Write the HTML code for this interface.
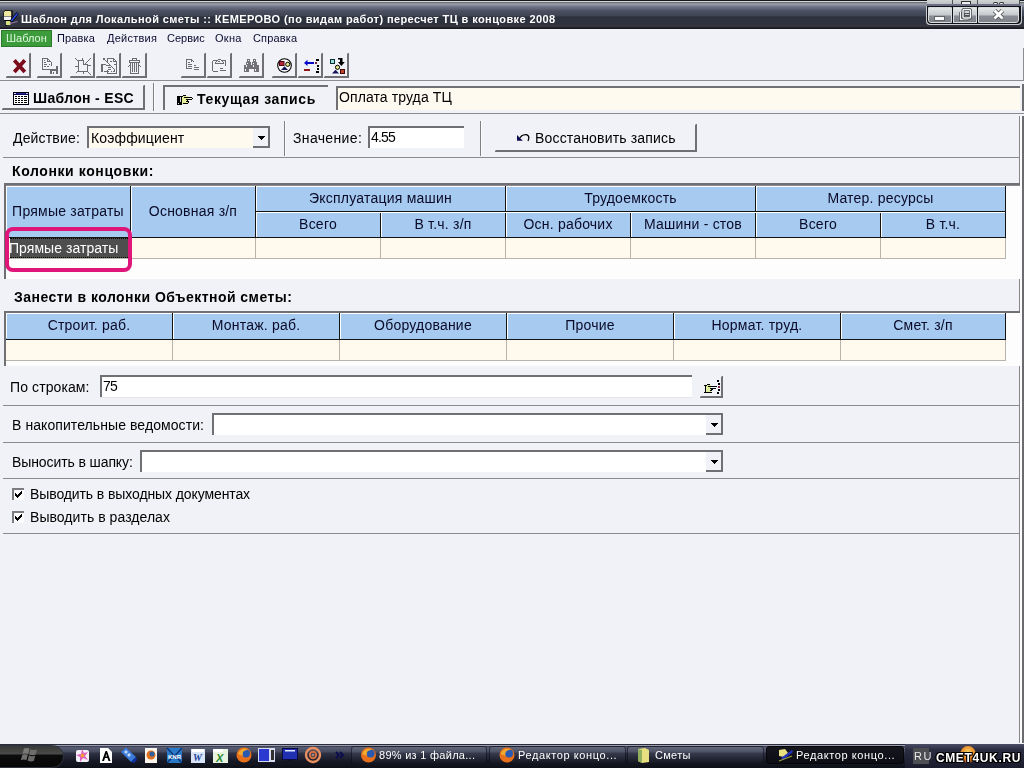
<!DOCTYPE html>
<html><head><meta charset="utf-8">
<style>
*{margin:0;padding:0;box-sizing:border-box}
html,body{width:1024px;height:768px;overflow:hidden;background:#f1f2f7;font-family:"Liberation Sans",sans-serif;color:#000}
.a{position:absolute}
.t{position:absolute;white-space:pre;will-change:transform}
svg{position:absolute;overflow:visible}
</style></head><body>
<div class="a" style="left:0px;top:0px;width:1024px;height:29px;background:linear-gradient(#15191c 0,#15191c 1px,#d5d9d9 1px,#d5d9d9 2px,#5c6064 2px,#7c8088 3px,#a0a4ae 4px,#8a8e9c 5px,#6e7286 7px,#5c6274 9px,#4a5060 11px,#3e4452 16px,#2a2e3a 17px,#2e323e 18px,#2e323e 24px,#32343e 25px,#32343e 27px,#28282e 27px,#1a1a20 28px);"></div>
<div class="t" style="left:21px;top:14px;font-size:11px;line-height:11px;font-weight:bold;color:#fff;letter-spacing:0.4px;">Шаблон для Локальной сметы :: КЕМЕРОВО (по видам работ) пересчет ТЦ в концовке 2008</div>
<svg style="left:1px;top:8px" width="20" height="20" viewBox="0 0 20 20">
 <path d="M2.5 4.5 L4 2.5 H9.5 L11 4.5 V8.5 H2.5 Z" fill="#f0e8a0" stroke="#101010" stroke-width="0.9"/>
 <rect x="3" y="8.5" width="7" height="3.5" fill="#f2f2f4"/>
 <path d="M3 12.5 H9.5" stroke="#000" stroke-width="1"/>
 <path d="M5 13 H9.5 V17 H5 Z" fill="#d8e080"/>
 <path d="M4.5 17.5 H6" stroke="#000" stroke-width="1"/>
 <path d="M11 2 V8" stroke="#000" stroke-width="1"/>
 <path d="M9 13 L15.5 4.5 L17.5 6 L11 14 Z" fill="#2848d8" stroke="#000" stroke-width="0.8"/>
 <path d="M9 15.5 L16.5 13.5" stroke="#9a78b0" stroke-width="1.2"/>
</svg>
<div class="a" style="left:927px;top:0px;width:93px;height:5px;background:linear-gradient(#d0d4d4,#b8bcc0);"></div>
<div class="a" style="left:952px;top:0px;width:1px;height:5px;background:#505058;"></div>
<div class="a" style="left:977px;top:0px;width:1px;height:5px;background:#505058;"></div>
<div class="a" style="left:1019px;top:0px;width:1px;height:5px;background:#505058;"></div>
<div class="a" style="left:961px;top:1px;width:10px;height:4px;background:#f0f0f0;border:1px solid #303030;border-bottom:none;border-radius:1px 1px 0 0"></div>
<div class="a" style="left:993px;top:2px;width:5px;height:3px;background:#f4f4f4;border:1px solid #303030;border-bottom:none;border-radius:2px 2px 0 0"></div>
<div class="a" style="left:999px;top:2px;width:5px;height:3px;background:#f4f4f4;border:1px solid #303030;border-bottom:none;border-radius:2px 2px 0 0"></div>
<div class="a" style="left:927px;top:4px;width:93px;height:2px;background:#6c6e84;"></div>
<div class="a" style="left:926px;top:6px;width:96px;height:19px;background:#c8cccc;border-radius:0 0 4px 4px"></div>
<div class="a" style="left:927px;top:6px;width:94px;height:18px;background:#101018;border-radius:0 0 4px 4px"></div>
<div class="a" style="left:928px;top:7px;width:24px;height:16px;background:linear-gradient(#e4e6e6 0,#c4c8cc 7px,#8a8e94 8px,#7c8086 16px);border:1px solid #d8dcdc;border-radius:0 0 0 3px"></div>
<div class="a" style="left:953px;top:7px;width:24px;height:16px;background:linear-gradient(#e4e6e6 0,#c4c8cc 7px,#8a8e94 8px,#7c8086 16px);border:1px solid #d8dcdc"></div>
<div class="a" style="left:978px;top:7px;width:41px;height:16px;background:linear-gradient(#e4e6e6 0,#c4c8cc 7px,#8a8e94 8px,#7c8086 16px);border:1px solid #d8dcdc;border-radius:0 0 3px 0"></div>
<div class="a" style="left:935px;top:17px;width:9px;height:3px;background:#fafafa;box-shadow:0 0 0 1px #606468"></div>
<svg style="left:958px;top:8px" width="14" height="13" viewBox="0 0 14 13">
 <path d="M2.5 4 V11.5 H10" fill="none" stroke="#404448" stroke-width="3"/>
 <path d="M2.5 4 V11.5 H10" fill="none" stroke="#f4f4f4" stroke-width="1.5"/>
 <rect x="5" y="1.5" width="7.5" height="8.5" fill="none" stroke="#404448" stroke-width="3" rx="1"/>
 <rect x="5" y="1.5" width="7.5" height="8.5" fill="none" stroke="#f4f4f4" stroke-width="1.5" rx="1"/>
 <rect x="6.5" y="5.5" width="4.5" height="2" fill="none" stroke="#505458" stroke-width="1"/>
</svg>
<svg style="left:992px;top:9px" width="13" height="11" viewBox="0 0 13 11">
 <path d="M2.5 1.5 L10.5 9.5 M10.5 1.5 L2.5 9.5" stroke="#404040" stroke-width="4.4"/>
 <path d="M2.5 1.5 L10.5 9.5 M10.5 1.5 L2.5 9.5" stroke="#fff" stroke-width="3"/>
</svg>
<div class="a" style="left:1px;top:30px;width:51px;height:17px;background:#3c9c3c;border:1px solid #2d7a2d"></div>
<div class="t" style="left:6px;top:33px;font-size:11px;line-height:11px;color:#e0f8e0;letter-spacing:0px;">Шаблон</div>
<div class="t" style="left:57px;top:33px;font-size:11px;line-height:11px;color:#0a0a30;letter-spacing:0.15px;">Правка</div>
<div class="t" style="left:107px;top:33px;font-size:11px;line-height:11px;color:#0a0a30;letter-spacing:0.25px;">Действия</div>
<div class="t" style="left:167px;top:33px;font-size:11px;line-height:11px;color:#0a0a30;letter-spacing:0px;">Сервис</div>
<div class="t" style="left:215px;top:33px;font-size:11px;line-height:11px;color:#0a0a30;letter-spacing:0.3px;">Окна</div>
<div class="t" style="left:253px;top:33px;font-size:11px;line-height:11px;color:#0a0a30;letter-spacing:0.15px;">Справка</div>
<div class="a" style="left:6px;top:53px;width:25px;height:25px;background:transparent;border-right:2px solid #707074;border-bottom:2px solid #707074;clip-path:polygon(23px 1px,26px -2px,26px 26px,-2px 26px,1px 23px)"></div>
<div class="a" style="left:37px;top:53px;width:25px;height:25px;background:transparent;border-right:2px solid #707074;border-bottom:2px solid #707074;clip-path:polygon(23px 1px,26px -2px,26px 26px,-2px 26px,1px 23px)"></div>
<div class="a" style="left:70px;top:53px;width:25px;height:25px;background:transparent;border-right:2px solid #707074;border-bottom:2px solid #707074;clip-path:polygon(23px 1px,26px -2px,26px 26px,-2px 26px,1px 23px)"></div>
<div class="a" style="left:96px;top:53px;width:25px;height:25px;background:transparent;border-right:2px solid #707074;border-bottom:2px solid #707074;clip-path:polygon(23px 1px,26px -2px,26px 26px,-2px 26px,1px 23px)"></div>
<div class="a" style="left:122px;top:53px;width:25px;height:25px;background:transparent;border-right:2px solid #707074;border-bottom:2px solid #707074;clip-path:polygon(23px 1px,26px -2px,26px 26px,-2px 26px,1px 23px)"></div>
<div class="a" style="left:181px;top:53px;width:25px;height:25px;background:transparent;border-right:2px solid #707074;border-bottom:2px solid #707074;clip-path:polygon(23px 1px,26px -2px,26px 26px,-2px 26px,1px 23px)"></div>
<div class="a" style="left:207px;top:53px;width:25px;height:25px;background:transparent;border-right:2px solid #707074;border-bottom:2px solid #707074;clip-path:polygon(23px 1px,26px -2px,26px 26px,-2px 26px,1px 23px)"></div>
<div class="a" style="left:239px;top:53px;width:25px;height:25px;background:transparent;border-right:2px solid #707074;border-bottom:2px solid #707074;clip-path:polygon(23px 1px,26px -2px,26px 26px,-2px 26px,1px 23px)"></div>
<div class="a" style="left:272px;top:53px;width:25px;height:25px;background:transparent;border-right:2px solid #707074;border-bottom:2px solid #707074;clip-path:polygon(23px 1px,26px -2px,26px 26px,-2px 26px,1px 23px)"></div>
<div class="a" style="left:298px;top:53px;width:25px;height:25px;background:transparent;border-right:2px solid #707074;border-bottom:2px solid #707074;clip-path:polygon(23px 1px,26px -2px,26px 26px,-2px 26px,1px 23px)"></div>
<div class="a" style="left:324px;top:53px;width:25px;height:25px;background:transparent;border-right:2px solid #707074;border-bottom:2px solid #707074;clip-path:polygon(23px 1px,26px -2px,26px 26px,-2px 26px,1px 23px)"></div>
<svg style="left:0;top:48px" width="360" height="32" viewBox="0 48 360 32">
 <!-- 1: X -->
 <path d="M14.3 60.3 L24.8 72 M24.8 60.3 L14.3 72" stroke="#7c0c1c" stroke-width="3.8" stroke-linecap="butt"/>
 <g shape-rendering="crispEdges" fill="#6c6c70">
 <!-- 2: doc + desk -->
  <rect x="42" y="58" width="6" height="1"/><rect x="42" y="58" width="1" height="12"/><rect x="42" y="69" width="8" height="1"/>
  <rect x="47" y="58" width="1" height="4"/><rect x="47" y="61" width="4" height="1"/><rect x="48" y="59" width="1" height="1"/><rect x="49" y="60" width="1" height="1"/><rect x="50" y="61" width="1" height="1"/>
  <rect x="51" y="62" width="1" height="4"/>
  <rect x="44" y="60" width="1" height="1"/><rect x="44" y="62" width="2" height="1"/><rect x="44" y="64" width="3" height="1"/><rect x="49" y="64" width="1" height="1"/><rect x="44" y="66" width="2" height="1"/><rect x="47" y="66" width="2" height="1"/>
  <rect x="50" y="69" width="8" height="2"/><rect x="50" y="71" width="2" height="3"/><rect x="53" y="72" width="1" height="2"/><rect x="56" y="66" width="2" height="8"/>
 <!-- 3: broken doc with rays -->
  <rect x="78" y="60" width="6" height="1"/><rect x="78" y="60" width="1" height="12"/><rect x="78" y="71" width="10" height="1"/>
  <rect x="83" y="60" width="1" height="5"/><rect x="83" y="64" width="5" height="1"/><rect x="87" y="64" width="1" height="8"/>
  <rect x="75" y="58" width="1" height="1"/><rect x="76" y="59" width="1" height="1"/><rect x="77" y="60" width="1" height="1"/>
  <rect x="82" y="58" width="1" height="2"/>
  <rect x="90" y="58" width="1" height="1"/><rect x="89" y="59" width="1" height="1"/><rect x="88" y="60" width="1" height="1"/><rect x="87" y="61" width="1" height="1"/><rect x="86" y="62" width="1" height="1"/><rect x="85" y="63" width="1" height="1"/>
  <rect x="75" y="66" width="3" height="1"/><rect x="88" y="65" width="3" height="1"/>
  <rect x="76" y="72" width="1" height="1"/><rect x="77" y="71" width="1" height="1"/>
  <rect x="83" y="72" width="1" height="2"/>
  <rect x="88" y="72" width="1" height="1"/><rect x="89" y="73" width="1" height="1"/><rect x="90" y="74" width="1" height="1"/>
 <!-- 4: doc with wand -->
  <rect x="107" y="58" width="7" height="1"/><rect x="107" y="58" width="1" height="4"/><rect x="107" y="70" width="1" height="4"/><rect x="107" y="73" width="10" height="1"/><rect x="116" y="62" width="1" height="12"/>
  <rect x="114" y="59" width="1" height="1"/><rect x="115" y="60" width="1" height="1"/><rect x="116" y="61" width="1" height="1"/><rect x="113" y="58" width="1" height="4"/><rect x="113" y="61" width="4" height="1"/>
  <rect x="103" y="58" width="2" height="2"/><rect x="105" y="60" width="1" height="1"/><rect x="106" y="61" width="1" height="1"/><rect x="107" y="62" width="1" height="1"/><rect x="108" y="63" width="1" height="1"/><rect x="109" y="64" width="1" height="1"/><rect x="110" y="65" width="1" height="1"/><rect x="111" y="66" width="1" height="1"/><rect x="112" y="67" width="1" height="1"/><rect x="113" y="68" width="1" height="1"/><rect x="114" y="69" width="1" height="2"/>
  <rect x="101" y="64" width="2" height="8"/><rect x="101" y="64" width="5" height="1"/><rect x="104" y="71" width="5" height="1"/>
  <rect x="110" y="61" width="2" height="1"/><rect x="114" y="64" width="2" height="1"/><rect x="106" y="65" width="4" height="1"/><rect x="108" y="67" width="3" height="1"/><rect x="108" y="69" width="3" height="1"/><rect x="111" y="71" width="1" height="1"/><rect x="113" y="71" width="2" height="1"/>
 <!-- 5: trash -->
  <rect x="132" y="58" width="5" height="1"/><rect x="132" y="58" width="1" height="2"/><rect x="136" y="58" width="1" height="2"/>
  <rect x="129" y="60" width="11" height="1"/><rect x="129" y="60" width="1" height="3"/><rect x="139" y="60" width="1" height="3"/><rect x="129" y="62" width="11" height="1"/>
  <rect x="130" y="63" width="1" height="11"/><rect x="138" y="63" width="1" height="11"/><rect x="130" y="73" width="9" height="1"/>
  <rect x="132" y="63" width="1" height="9"/><rect x="134" y="63" width="1" height="9"/><rect x="136" y="63" width="1" height="9"/>
  <rect x="128" y="66" width="1" height="1"/><rect x="129" y="65" width="1" height="1"/><rect x="139" y="65" width="1" height="1"/><rect x="140" y="66" width="1" height="1"/>
 <!-- 6: doc lines -->
  <rect x="186" y="59" width="6" height="1"/><rect x="186" y="59" width="1" height="10"/><rect x="186" y="68" width="6" height="1"/>
  <rect x="192" y="60" width="1" height="1"/><rect x="193" y="61" width="1" height="1"/><rect x="191" y="60" width="1" height="2"/>
  <rect x="188" y="62" width="2" height="1"/><rect x="188" y="64" width="4" height="1"/><rect x="188" y="66" width="4" height="1"/>
  <rect x="194" y="65" width="2" height="1"/><rect x="194" y="67" width="5" height="1"/><rect x="194" y="69" width="5" height="1"/>
 <!-- 7: clipboard -->
  <rect x="212" y="61" width="1" height="10"/><rect x="213" y="60" width="4" height="1"/><rect x="222" y="60" width="4" height="1"/><rect x="225" y="61" width="1" height="5"/><rect x="213" y="71" width="5" height="1"/>
  <rect x="218" y="59" width="3" height="1"/><rect x="217" y="60" width="1" height="1"/><rect x="221" y="60" width="1" height="1"/><rect x="216" y="61" width="1" height="1"/><rect x="222" y="61" width="1" height="1"/><rect x="215" y="62" width="1" height="1"/><rect x="223" y="62" width="1" height="1"/><rect x="215" y="63" width="9" height="1"/><rect x="218" y="61" width="2" height="1"/>
  <rect x="220" y="68" width="3" height="1"/><rect x="220" y="70" width="6" height="1"/>
 </g>
 <!-- 8: binoculars -->
 <g shape-rendering="crispEdges" fill="#727276">
  <rect x="247" y="59" width="3" height="3"/><rect x="253" y="59" width="3" height="3"/>
  <rect x="246" y="62" width="5" height="3"/><rect x="252" y="62" width="5" height="3"/>
  <rect x="244" y="65" width="5" height="7"/><rect x="254" y="65" width="5" height="7"/>
  <rect x="249" y="65" width="5" height="4"/>
 </g>
 <g shape-rendering="crispEdges" fill="#f4f4f8">
  <rect x="248" y="60" width="1" height="1"/><rect x="254" y="60" width="1" height="1"/>
  <rect x="247" y="63" width="1" height="1"/><rect x="253" y="63" width="1" height="1"/>
  <rect x="246" y="65" width="1" height="2"/><rect x="253" y="65" width="1" height="2"/>
  <rect x="245" y="69" width="1" height="2"/><rect x="255" y="69" width="1" height="2"/>
 </g>
 <!-- 9: circle with shapes -->
 <circle cx="284.5" cy="65.5" r="6.8" fill="#fbfbfd" stroke="#000" stroke-width="1.1"/>
 <rect x="279.5" y="61.5" width="4.5" height="4" fill="#b02838" stroke="#500010" stroke-width="1"/>
 <circle cx="287.7" cy="64.3" r="2.1" fill="#e4e488" stroke="#000" stroke-width="1"/>
 <path d="M281 70 L284.5 66.3 L288 70 Z" fill="#141458"/>
 <!-- 10: arrow + dots -->
 <path d="M304 62.9 L307.5 59.8 V61.9 H314 V63.9 H307.5 V66 Z" fill="#0808c8"/>
 <g shape-rendering="crispEdges">
  <rect x="304" y="69" width="6" height="2" fill="#901818"/>
  <rect x="315" y="62" width="2" height="2" fill="#702040"/>
  <rect x="316" y="59" width="3" height="2" fill="#000"/><rect x="317" y="65" width="2" height="2" fill="#000"/><rect x="317" y="68" width="2" height="2" fill="#000"/><rect x="316" y="71" width="3" height="2" fill="#000"/>
 </g>
 <!-- 11: shapes with arrow -->
 <rect x="330.5" y="59.5" width="4" height="4" fill="#a0dcdc" stroke="#003030" stroke-width="1"/>
 <path d="M338 58 H342.5 V62 H344.8 L341.4 66 L338 62 H340 V59.5 H338 Z" fill="#000"/>
 <circle cx="337.5" cy="67.3" r="2.1" fill="#e4e488" stroke="#000" stroke-width="1"/>
 <path d="M332 73.6 L335.5 69.8 L339 73.6 Z" fill="#141458"/>
 <rect x="340.5" y="69.5" width="4" height="4" fill="#c04428" stroke="#400808" stroke-width="1"/>
</svg>

<div class="a" style="left:0px;top:80px;width:1024px;height:1px;background:#8c8c90;"></div>
<div class="a" style="left:2px;top:85px;width:143px;height:25px;background:transparent;border-right:2px solid #707074;border-bottom:2px solid #707074;clip-path:polygon(141px 1px,144px -2px,144px 26px,-2px 26px,1px 23px)"></div>
<svg style="left:13px;top:92px" width="16" height="13" viewBox="0 0 16 13">
 <rect x="0" y="0" width="16" height="13" fill="#000010"/>
 <rect x="1" y="1" width="14" height="2" fill="#0a0a60"/>
 <rect x="1" y="3" width="14" height="9" fill="#fff"/>
 <rect x="1" y="1" width="2" height="1" fill="#c8c8f0"/><rect x="13" y="1" width="2" height="1" fill="#c8c8f0"/><rect x="4" y="1" width="8" height="1" fill="#2828a0"/>
 <g fill="#000">
  <rect x="2" y="4" width="2" height="1"/><rect x="5" y="4" width="2" height="1"/><rect x="8" y="4" width="2" height="1"/><rect x="11" y="4" width="3" height="1"/>
  <rect x="2" y="6" width="2" height="1"/><rect x="5" y="6" width="2" height="1"/><rect x="8" y="6" width="2" height="1"/><rect x="11" y="6" width="3" height="1"/>
  <rect x="2" y="8" width="2" height="1"/><rect x="5" y="8" width="2" height="1"/><rect x="8" y="8" width="2" height="1"/><rect x="11" y="8" width="3" height="1"/>
  <rect x="2" y="10" width="2" height="1"/><rect x="5" y="10" width="2" height="1"/><rect x="8" y="10" width="2" height="1"/><rect x="11" y="10" width="3" height="1"/>
 </g>
</svg>
<div class="t" style="left:33px;top:91px;font-size:14px;line-height:14px;font-weight:bold;color:#000;letter-spacing:0.33px;">Шаблон - ESC</div>
<div class="a" style="left:153px;top:83px;width:1px;height:28px;background:#808084;"></div>
<div class="a" style="left:154px;top:83px;width:1px;height:28px;background:#fcfcfc;"></div>
<div class="a" style="left:163px;top:85px;width:165px;height:25px;background:transparent;border-left:2px solid #707074;border-top:2px solid #707074"></div>
<svg style="left:0;top:0" width="1" height="1" viewBox="0 0 1 1" shape-rendering="crispEdges">
 <rect x="182" y="96" width="6" height="8" fill="#e4ee98"/>
 <rect x="188" y="98" width="4" height="1" fill="#f8f8e0"/>
 <g fill="#000">
  <rect x="177" y="96" width="5" height="9"/>
  <rect x="183" y="95" width="3" height="1"/><rect x="182" y="96" width="1" height="1"/>
  <rect x="184" y="97" width="8" height="1"/><rect x="192" y="98" width="1" height="1"/>
  <rect x="186" y="99" width="6" height="1"/><rect x="187" y="100" width="1" height="1"/>
  <rect x="186" y="101" width="3" height="1"/><rect x="188" y="102" width="1" height="1"/>
  <rect x="183" y="103" width="5" height="1"/>
 </g>
 <rect x="180" y="97" width="1" height="5" fill="#c8ccd0"/>
 <rect x="178" y="103" width="1" height="1" fill="#e0e0e0"/>
</svg>
<div class="t" style="left:197px;top:92px;font-size:14px;line-height:14px;font-weight:bold;color:#000;letter-spacing:0.62px;">Текущая запись</div>
<div class="a" style="left:336px;top:86px;width:684px;height:24px;background:#fffaf0;border-left:2px solid #707074;border-top:2px solid #707074"></div>
<div class="t" style="left:339px;top:90px;font-size:14px;line-height:14px;color:#000;letter-spacing:0.1px;">Оплата труда ТЦ</div>
<div class="a" style="left:0px;top:113px;width:1024px;height:1px;background:#8c8c90;"></div>
<div class="a" style="left:1019px;top:116px;width:1px;height:627px;background:#88888c;"></div>
<div class="a" style="left:1020px;top:116px;width:2px;height:627px;background:#fcfcfc;"></div>
<div class="a" style="left:1022px;top:116px;width:2px;height:627px;background:#6c6c70;"></div>
<div class="a" style="left:1023px;top:48px;width:1px;height:32px;background:#8c8c90;"></div>
<div class="a" style="left:1022px;top:84px;width:2px;height:27px;background:#6c6c70;"></div>
<div class="t" style="left:13px;top:131px;font-size:14px;line-height:14px;color:#000;letter-spacing:0.17px;">Действие:</div>
<div class="a" style="left:87px;top:126px;width:166px;height:22px;background:#fffaf0;border-left:2px solid #707074;border-top:2px solid #707074"></div>
<div class="a" style="left:253px;top:126px;width:17px;height:22px;background:#f1f2f7;border-top:2px solid #707074;border-right:2px solid #707074;border-bottom:2px solid #707074"></div>
<svg style="left:258px;top:136px" width="7" height="4" viewBox="0 0 7 4"><path d="M0 0 H7 V1 H6 V2 H5 V3 H4 V4 H3 V3 H2 V2 H1 V1 H0Z" fill="#000"/></svg>
<div class="t" style="left:91px;top:131px;font-size:14px;line-height:14px;color:#000;letter-spacing:0.15px;">Коэффициент</div>
<div class="a" style="left:284px;top:121px;width:1px;height:35px;background:#808084;"></div>
<div class="a" style="left:285px;top:121px;width:1px;height:35px;background:#fcfcfc;"></div>
<div class="t" style="left:293px;top:131px;font-size:14px;line-height:14px;color:#000;letter-spacing:0.35px;">Значение:</div>
<div class="a" style="left:368px;top:126px;width:96px;height:22px;background:#fff;border-left:2px solid #707074;border-top:2px solid #707074"></div>
<div class="t" style="left:371px;top:130px;font-size:14px;line-height:14px;color:#000;letter-spacing:-0.8px;">4.55</div>
<div class="a" style="left:480px;top:121px;width:1px;height:35px;background:#808084;"></div>
<div class="a" style="left:481px;top:121px;width:1px;height:35px;background:#fcfcfc;"></div>
<div class="a" style="left:495px;top:124px;width:202px;height:28px;background:transparent;border-right:2px solid #707074;border-bottom:2px solid #707074;clip-path:polygon(200px 1px,203px -2px,203px 29px,-2px 29px,1px 26px)"></div>
<svg style="left:0;top:0" width="1" height="1" viewBox="0 0 1 1">
 <path d="M517 135 V140.8 H522.8 Z" fill="#0a0a50"/>
 <path d="M519.8 137.8 L521.5 136 Q523.5 134.3 526.5 134.6 Q529.3 135.5 528.8 138.5 L528 141" fill="none" stroke="#000" stroke-width="1.2"/>
</svg>
<div class="t" style="left:535px;top:131px;font-size:14px;line-height:14px;color:#000;letter-spacing:0.17px;">Восстановить запись</div>
<div class="a" style="left:3px;top:157px;width:1016px;height:1px;background:#8c8c90;"></div>
<div class="t" style="left:12px;top:164px;font-size:14px;line-height:14px;font-weight:bold;color:#000;letter-spacing:0.6px;">Колонки концовки:</div>
<div class="a" style="left:4px;top:183px;width:1016px;height:96px;background:#fdfdfd;"></div>
<div class="a" style="left:4px;top:183px;width:1016px;height:2px;background:#707074;"></div>
<div class="a" style="left:4px;top:185px;width:1016px;height:1px;background:#8a8a90;"></div>
<div class="a" style="left:4px;top:183px;width:2px;height:96px;background:#707074;"></div>
<div class="a" style="left:6px;top:186px;width:1000px;height:51px;background:#a6caf0;"></div>
<div class="a" style="left:6px;top:186px;width:1000px;height:1px;background:#fff;"></div>
<div class="a" style="left:6px;top:186px;width:1px;height:51px;background:#fff;"></div>
<div class="a" style="left:6px;top:238px;width:1000px;height:20px;background:#fff9ee;"></div>
<div class="a" style="left:130px;top:238px;width:1px;height:20px;background:#b8b4ac;"></div>
<div class="a" style="left:255px;top:238px;width:1px;height:20px;background:#b8b4ac;"></div>
<div class="a" style="left:380px;top:238px;width:1px;height:20px;background:#b8b4ac;"></div>
<div class="a" style="left:505px;top:238px;width:1px;height:20px;background:#b8b4ac;"></div>
<div class="a" style="left:630px;top:238px;width:1px;height:20px;background:#b8b4ac;"></div>
<div class="a" style="left:755px;top:238px;width:1px;height:20px;background:#b8b4ac;"></div>
<div class="a" style="left:880px;top:238px;width:1px;height:20px;background:#b8b4ac;"></div>
<div class="a" style="left:1005px;top:238px;width:1px;height:21px;background:#b8b4ac;"></div>
<div class="a" style="left:6px;top:258px;width:1000px;height:1px;background:#b8b4ac;"></div>
<div class="a" style="left:6px;top:237px;width:1000px;height:1px;background:#141414;"></div>
<div class="a" style="left:1005px;top:186px;width:1px;height:52px;background:#141414;"></div>
<div class="a" style="left:130px;top:186px;width:1px;height:51px;background:#141414;"></div>
<div class="a" style="left:131px;top:187px;width:1px;height:50px;background:#fff;"></div>
<div class="a" style="left:255px;top:186px;width:1px;height:51px;background:#141414;"></div>
<div class="a" style="left:256px;top:187px;width:1px;height:50px;background:#fff;"></div>
<div class="a" style="left:505px;top:186px;width:1px;height:51px;background:#141414;"></div>
<div class="a" style="left:506px;top:187px;width:1px;height:50px;background:#fff;"></div>
<div class="a" style="left:755px;top:186px;width:1px;height:51px;background:#141414;"></div>
<div class="a" style="left:756px;top:187px;width:1px;height:50px;background:#fff;"></div>
<div class="a" style="left:380px;top:212px;width:1px;height:25px;background:#141414;"></div>
<div class="a" style="left:381px;top:213px;width:1px;height:24px;background:#fff;"></div>
<div class="a" style="left:630px;top:212px;width:1px;height:25px;background:#141414;"></div>
<div class="a" style="left:631px;top:213px;width:1px;height:24px;background:#fff;"></div>
<div class="a" style="left:880px;top:212px;width:1px;height:25px;background:#141414;"></div>
<div class="a" style="left:881px;top:213px;width:1px;height:24px;background:#fff;"></div>
<div class="a" style="left:256px;top:211px;width:749px;height:1px;background:#141414;"></div>
<div class="a" style="left:256px;top:212px;width:749px;height:1px;background:#fff;"></div>
<div class="t" style="left:6px;top:204px;width:124px;text-align:center;font-size:14px;line-height:14px;color:#0a0a28;letter-spacing:0.22px">Прямые затраты</div>
<div class="t" style="left:131px;top:204px;width:124px;text-align:center;font-size:14px;line-height:14px;color:#0a0a28;letter-spacing:0.22px">Основная з/п</div>
<div class="t" style="left:256px;top:191px;width:249px;text-align:center;font-size:14px;line-height:14px;color:#0a0a28;letter-spacing:0.22px">Эксплуатация машин</div>
<div class="t" style="left:256px;top:217px;width:124px;text-align:center;font-size:14px;line-height:14px;color:#0a0a28;letter-spacing:0.22px">Всего</div>
<div class="t" style="left:381px;top:217px;width:124px;text-align:center;font-size:14px;line-height:14px;color:#0a0a28;letter-spacing:0.22px">В т.ч. з/п</div>
<div class="t" style="left:506px;top:191px;width:249px;text-align:center;font-size:14px;line-height:14px;color:#0a0a28;letter-spacing:0.22px">Трудоемкость</div>
<div class="t" style="left:506px;top:217px;width:124px;text-align:center;font-size:14px;line-height:14px;color:#0a0a28;letter-spacing:0.22px">Осн. рабочих</div>
<div class="t" style="left:631px;top:217px;width:124px;text-align:center;font-size:14px;line-height:14px;color:#0a0a28;letter-spacing:0.22px">Машини - стов</div>
<div class="t" style="left:756px;top:191px;width:249px;text-align:center;font-size:14px;line-height:14px;color:#0a0a28;letter-spacing:0.22px">Матер. ресурсы</div>
<div class="t" style="left:756px;top:217px;width:124px;text-align:center;font-size:14px;line-height:14px;color:#0a0a28;letter-spacing:0.22px">Всего</div>
<div class="t" style="left:881px;top:217px;width:124px;text-align:center;font-size:14px;line-height:14px;color:#0a0a28;letter-spacing:0.22px">В т.ч.</div>
<div class="a" style="left:10px;top:238px;width:118px;height:20px;background:#4e4e4e;border-top:1px dotted #000;border-bottom:1px dotted #000"></div>
<div class="t" style="left:9px;top:241px;font-size:14px;line-height:14px;color:#fff;letter-spacing:0.05px;">Прямые затраты</div>
<div class="a" style="left:5px;top:227px;width:127px;height:45px;background:transparent;border:4px solid #e0157a;border-radius:8px"></div>
<div class="t" style="left:14px;top:290px;font-size:14px;line-height:14px;font-weight:bold;color:#000;letter-spacing:0.47px;">Занести в колонки Объектной сметы:</div>
<div class="a" style="left:4px;top:311px;width:1016px;height:55px;background:#fdfdfd;"></div>
<div class="a" style="left:4px;top:311px;width:1016px;height:2px;background:#707074;"></div>
<div class="a" style="left:4px;top:311px;width:2px;height:55px;background:#707074;"></div>
<div class="a" style="left:6px;top:313px;width:1000px;height:26px;background:#a6caf0;"></div>
<div class="a" style="left:6px;top:313px;width:1000px;height:1px;background:#fff;"></div>
<div class="a" style="left:6px;top:313px;width:1px;height:25px;background:#fff;"></div>
<div class="a" style="left:6px;top:340px;width:1000px;height:20px;background:#fff9ee;"></div>
<div class="a" style="left:172px;top:313px;width:1px;height:26px;background:#141414;"></div>
<div class="a" style="left:173px;top:314px;width:1px;height:25px;background:#fff;"></div>
<div class="a" style="left:172px;top:340px;width:1px;height:20px;background:#b8b4ac;"></div>
<div class="a" style="left:339px;top:313px;width:1px;height:26px;background:#141414;"></div>
<div class="a" style="left:340px;top:314px;width:1px;height:25px;background:#fff;"></div>
<div class="a" style="left:339px;top:340px;width:1px;height:20px;background:#b8b4ac;"></div>
<div class="a" style="left:506px;top:313px;width:1px;height:26px;background:#141414;"></div>
<div class="a" style="left:507px;top:314px;width:1px;height:25px;background:#fff;"></div>
<div class="a" style="left:506px;top:340px;width:1px;height:20px;background:#b8b4ac;"></div>
<div class="a" style="left:673px;top:313px;width:1px;height:26px;background:#141414;"></div>
<div class="a" style="left:674px;top:314px;width:1px;height:25px;background:#fff;"></div>
<div class="a" style="left:673px;top:340px;width:1px;height:20px;background:#b8b4ac;"></div>
<div class="a" style="left:840px;top:313px;width:1px;height:26px;background:#141414;"></div>
<div class="a" style="left:841px;top:314px;width:1px;height:25px;background:#fff;"></div>
<div class="a" style="left:840px;top:340px;width:1px;height:20px;background:#b8b4ac;"></div>
<div class="a" style="left:1005px;top:313px;width:1px;height:27px;background:#141414;"></div>
<div class="a" style="left:1005px;top:340px;width:1px;height:21px;background:#b8b4ac;"></div>
<div class="a" style="left:6px;top:339px;width:1000px;height:1px;background:#141414;"></div>
<div class="a" style="left:6px;top:360px;width:1000px;height:1px;background:#b8b4ac;"></div>
<div class="t" style="left:6px;top:318px;width:166px;text-align:center;font-size:14px;line-height:14px;color:#0a0a28;letter-spacing:0.22px">Строит. раб.</div>
<div class="t" style="left:173px;top:318px;width:166px;text-align:center;font-size:14px;line-height:14px;color:#0a0a28;letter-spacing:0.22px">Монтаж. раб.</div>
<div class="t" style="left:340px;top:318px;width:166px;text-align:center;font-size:14px;line-height:14px;color:#0a0a28;letter-spacing:0.22px">Оборудование</div>
<div class="t" style="left:507px;top:318px;width:166px;text-align:center;font-size:14px;line-height:14px;color:#0a0a28;letter-spacing:0.22px">Прочие</div>
<div class="t" style="left:674px;top:318px;width:166px;text-align:center;font-size:14px;line-height:14px;color:#0a0a28;letter-spacing:0.22px">Нормат. труд.</div>
<div class="t" style="left:841px;top:318px;width:164px;text-align:center;font-size:14px;line-height:14px;color:#0a0a28;letter-spacing:0.22px">Смет. з/п</div>
<div class="t" style="left:10px;top:380px;font-size:14px;line-height:14px;color:#000;letter-spacing:0.1px;">По строкам:</div>
<div class="a" style="left:100px;top:375px;width:592px;height:22px;background:#fff;border-left:2px solid #707074;border-top:2px solid #707074"></div>
<div class="a" style="left:100px;top:397px;width:592px;height:1px;background:#e6e6ea;"></div>
<div class="t" style="left:103px;top:379px;font-size:14px;line-height:14px;color:#000;letter-spacing:-0.8px;">75</div>
<div class="a" style="left:700px;top:376px;width:23px;height:22px;background:transparent;border-right:2px solid #707074;border-bottom:2px solid #707074;clip-path:polygon(21px 1px,24px -2px,24px 23px,-2px 23px,1px 20px)"></div>
<svg style="left:0;top:0" width="1" height="1" viewBox="0 0 1 1" shape-rendering="crispEdges">
 <rect x="706" y="385" width="5" height="7" fill="#e0eea0"/>
 <g fill="#000">
  <rect x="704" y="385" width="3" height="1"/><rect x="705" y="385" width="1" height="8"/><rect x="704" y="392" width="3" height="1"/>
  <rect x="707" y="384" width="3" height="1"/>
  <rect x="708" y="386" width="9" height="1"/>
  <rect x="710" y="388" width="6" height="1"/><rect x="711" y="389" width="2" height="1"/>
  <rect x="710" y="390" width="2" height="1"/>
  <rect x="707" y="392" width="5" height="1"/>
  <rect x="717" y="380" width="2" height="2"/><rect x="718" y="383" width="2" height="2"/><rect x="718" y="389" width="2" height="2"/><rect x="717" y="392" width="2" height="2"/>
 </g>
 <rect x="718" y="386" width="2" height="2" fill="#802040"/>
</svg>
<div class="a" style="left:3px;top:405px;width:1016px;height:1px;background:#8c8c90;"></div>
<div class="t" style="left:12px;top:418px;font-size:14px;line-height:14px;color:#000;letter-spacing:0.08px;">В накопительные ведомости:</div>
<div class="a" style="left:212px;top:413px;width:494px;height:22px;background:#fff;border-left:2px solid #707074;border-top:2px solid #707074"></div>
<div class="a" style="left:706px;top:413px;width:17px;height:22px;background:#f1f2f7;border-top:2px solid #707074;border-right:2px solid #707074;border-bottom:2px solid #707074"></div>
<svg style="left:711px;top:423px" width="7" height="4" viewBox="0 0 7 4"><path d="M0 0 H7 V1 H6 V2 H5 V3 H4 V4 H3 V3 H2 V2 H1 V1 H0Z" fill="#000"/></svg>
<div class="a" style="left:3px;top:442px;width:1016px;height:1px;background:#8c8c90;"></div>
<div class="t" style="left:12px;top:455px;font-size:14px;line-height:14px;color:#000;letter-spacing:-0.1px;">Выносить в шапку:</div>
<div class="a" style="left:140px;top:450px;width:566px;height:22px;background:#fff;border-left:2px solid #707074;border-top:2px solid #707074"></div>
<div class="a" style="left:706px;top:450px;width:17px;height:22px;background:#f1f2f7;border-top:2px solid #707074;border-right:2px solid #707074;border-bottom:2px solid #707074"></div>
<svg style="left:711px;top:460px" width="7" height="4" viewBox="0 0 7 4"><path d="M0 0 H7 V1 H6 V2 H5 V3 H4 V4 H3 V3 H2 V2 H1 V1 H0Z" fill="#000"/></svg>
<div class="a" style="left:3px;top:478px;width:1016px;height:1px;background:#8c8c90;"></div>
<svg style="left:12px;top:488px" width="12" height="12" viewBox="0 0 12 12" shape-rendering="crispEdges">
 <rect x="0" y="0" width="12" height="2" fill="#7c7c80"/><rect x="0" y="0" width="2" height="12" fill="#7c7c80"/>
 <rect x="2" y="2" width="10" height="10" fill="#fcfcfc"/>
 <g fill="#000"><rect x="3" y="5" width="1" height="3"/><rect x="4" y="6" width="1" height="3"/><rect x="5" y="7" width="1" height="3"/><rect x="6" y="6" width="1" height="3"/><rect x="7" y="5" width="1" height="3"/><rect x="8" y="4" width="1" height="3"/><rect x="9" y="3" width="1" height="3"/></g>
</svg>
<div class="t" style="left:30px;top:487px;font-size:14px;line-height:14px;color:#000;letter-spacing:-0.1px;">Выводить в выходных документах</div>
<svg style="left:12px;top:511px" width="12" height="12" viewBox="0 0 12 12" shape-rendering="crispEdges">
 <rect x="0" y="0" width="12" height="2" fill="#7c7c80"/><rect x="0" y="0" width="2" height="12" fill="#7c7c80"/>
 <rect x="2" y="2" width="10" height="10" fill="#fcfcfc"/>
 <g fill="#000"><rect x="3" y="5" width="1" height="3"/><rect x="4" y="6" width="1" height="3"/><rect x="5" y="7" width="1" height="3"/><rect x="6" y="6" width="1" height="3"/><rect x="7" y="5" width="1" height="3"/><rect x="8" y="4" width="1" height="3"/><rect x="9" y="3" width="1" height="3"/></g>
</svg>
<div class="t" style="left:30px;top:510px;font-size:14px;line-height:14px;color:#000;letter-spacing:0.05px;">Выводить в разделах</div>
<div class="a" style="left:3px;top:533px;width:1016px;height:1px;background:#8c8c90;"></div>
<div class="a" style="left:0;top:743px;width:1024px;height:25px;background:linear-gradient(#f1f2f7 0,#f1f2f7 1px,#2a2c3a 1px,#2a2c3a 2px,#9a9cb0 2px,#9a9cb0 3px,#3c4054 3px,#3c4054 4px,#5a5e72 4px,#464a5e 9px,#2e3244 10px,#1a1c2a 17px,#161824 18px,#0e1018 25px)"></div>
<!-- start button -->
<div class="a" style="left:-12px;top:745px;width:76px;height:23px;border-radius:0 12px 12px 0;background:linear-gradient(#383838 0,#4a4a48 8px,#0c0c0c 9px,#050505 23px);border:1px solid #30343c"></div>
<svg style="left:20px;top:747px" width="20" height="16" viewBox="0 0 20 16">
 <path d="M4 1.5 C6 0.5 8 0.8 9.5 1.8 L8 7 C6.5 6 4.5 6 2.5 7 Z" fill="#7a7a78"/>
 <path d="M10.5 2.2 C12 3.2 14 3.4 17 2.5 L15.5 7.8 C13 8.5 11 8.3 9.2 7.3 Z" fill="#6e6e6c"/>
 <path d="M2.3 8 C4.2 7 6.2 7 7.8 8 L6.3 13.3 C4.8 12.3 2.8 12.3 0.8 13.3 Z" fill="#707070"/>
 <path d="M9 8.3 C10.8 9.3 12.8 9.5 15.3 8.8 L13.8 14 C11.5 14.8 9.5 14.5 7.6 13.5 Z" fill="#686866"/>
</svg>
<!-- quick launch icons -->
<svg style="left:74px;top:747px" width="272" height="18" viewBox="74 747 272 18">
 <rect x="76" y="750" width="13" height="12" rx="2" fill="#f4f0f8"/>
 <path d="M82 749 L84 753 L88 752 L85 756 L88 760 L83 758 L80 762 L80 757 L76 755 L81 754 Z" fill="#e060c0"/>
 <circle cx="82.5" cy="755.5" r="1.8" fill="#f0a030"/>
 <path d="M100 748 H108 L112 752 V763 H100 Z" fill="#fff"/>
 <path d="M102 761 L105.5 751 H107 L110.5 761 H108.5 L107.5 758 H105 L104 761 Z M105.5 756.5 H107 L106.3 754 Z" fill="#000"/>
 <path d="M121 752 L126 747.5 L136 757 L131 762 Z" fill="#3a7ad8"/>
 <path d="M124 752 L126 750 L128 752 L126 754 Z M127 755 L129 753 L131 755 L129 757 Z" fill="#c0d8f8"/>
 <path d="M131 762 L136 757 L137 760 L134 763 Z" fill="#1030a0"/>
 <rect x="145" y="748" width="12" height="15" fill="#f8f4ec"/>
 <circle cx="151" cy="755" r="4.5" fill="#e07020"/>
 <circle cx="152" cy="754" r="2.5" fill="#3060a0"/>
 <rect x="167" y="748" width="15" height="15" fill="#2a78c8"/>
 <path d="M167 748 L174 755.5 L167 763 M182 748 L175 755.5 L182 763" fill="none" stroke="#0a3070" stroke-width="1.2"/>
 <text x="168" y="759" font-family="Liberation Sans" font-size="6" font-weight="bold" fill="#fff">KNR</text>
 <rect x="191" y="749" width="14" height="14" fill="#d8e4f8"/>
 <rect x="192" y="749" width="12" height="3" fill="#fff"/>
 <text x="193" y="761" font-family="Liberation Serif" font-size="10" font-style="italic" font-weight="bold" fill="#2040a0">W</text>
 <rect x="213" y="749" width="15" height="14" fill="#e8f4e0"/>
 <path d="M213 749 h10 v3 h-10z" fill="#fff"/>
 <text x="216" y="762" font-family="Liberation Sans" font-size="11" font-style="italic" font-weight="bold" fill="#2a8a30">X</text>
 <circle cx="244" cy="755" r="7.5" fill="#e8701a"/>
 <circle cx="246" cy="753.5" r="4" fill="#2a5ab0"/>
 <path d="M238 754 C240 748 246 748 248 750 C244 750 242 752 243 756 Z" fill="#f0a830"/>
 <rect x="258" y="748" width="17" height="14" fill="#d8dcf0"/>
 <rect x="259" y="749" width="10" height="12" fill="#2a3ad0"/>
 <rect x="271" y="750" width="3" height="10" fill="#303030"/>
 <rect x="282" y="748" width="16" height="12" fill="#0a0a40"/>
 <rect x="283" y="749" width="14" height="10" fill="#2030b0"/>
 <rect x="285" y="750" width="10" height="1.5" fill="#e0e8ff"/>
 <path d="M286 763 L290 760 L294 763" fill="none" stroke="#101020" stroke-width="1"/>
 <circle cx="313" cy="755" r="7" fill="none" stroke="#e89060" stroke-width="2.4"/>
 <circle cx="313" cy="755" r="3.2" fill="none" stroke="#d87040" stroke-width="2"/>
 <circle cx="313" cy="755" r="1.6" fill="#a08880"/>
 <path d="M336 752 L339 755 L336 758 M340 752 L343 755 L340 758" fill="none" stroke="#0c0c50" stroke-width="2"/>
</svg>
<!-- task buttons -->
<div class="a" style="left:351px;top:746px;width:136px;height:18px;border-radius:3px;background:linear-gradient(rgba(255,255,255,0.06),rgba(255,255,255,0.02));border:1px solid rgba(10,10,20,0.55)"></div>
<div class="a" style="left:489px;top:746px;width:137px;height:18px;border-radius:3px;background:linear-gradient(rgba(255,255,255,0.06),rgba(255,255,255,0.02));border:1px solid rgba(10,10,20,0.55)"></div>
<div class="a" style="left:627px;top:746px;width:137px;height:18px;border-radius:3px;background:linear-gradient(rgba(255,255,255,0.06),rgba(255,255,255,0.02));border:1px solid rgba(10,10,20,0.55)"></div>
<div class="a" style="left:766px;top:746px;width:138px;height:18px;border-radius:3px;background:linear-gradient(#15161e,#0c0d14);border:1px solid #060608"></div>
<svg style="left:358px;top:746px" width="440" height="18" viewBox="358 746 440 18">
 <circle cx="368.5" cy="755" r="7.5" fill="#e8701a"/>
 <circle cx="370.5" cy="753.5" r="4" fill="#2a5ab0"/>
 <path d="M362 754 C364 748 370 748 372 750 C368 750 366 752 367 756 Z" fill="#f0a830"/>
 <circle cx="507" cy="755" r="7.5" fill="#e8701a"/>
 <circle cx="509" cy="753.5" r="4" fill="#2a5ab0"/>
 <path d="M500.5 754 C502.5 748 508.5 748 510.5 750 C506.5 750 504.5 752 505.5 756 Z" fill="#f0a830"/>
 <path d="M638 749 L645 748 L649 750 V762 L642 763 L638 761 Z" fill="#e8e080"/>
 <path d="M638 749 L642 750 V763 L638 761 Z" fill="#90b060"/>
 <path d="M779 750 L785 749 L788 753 L784 757 L779 756 Z" fill="#e8e080"/>
 <path d="M781 758 L792 750 L793 752 L783 760 Z" fill="#2030c0"/>
 <path d="M779 761 L792 756" stroke="#a0a040" stroke-width="1.2"/>
</svg>
<div class="t" style="left:379px;top:750px;font-size:11px;line-height:11px;color:#fff;letter-spacing:0.28px">89% из 1 файла...</div>
<div class="t" style="left:518px;top:750px;font-size:11px;line-height:11px;color:#fff;letter-spacing:0.6px">Редактор концо...</div>
<div class="t" style="left:655px;top:750px;font-size:11px;line-height:11px;color:#fff;letter-spacing:0.3px">Сметы</div>
<div class="t" style="left:796px;top:750px;font-size:11px;line-height:11px;color:#fff;letter-spacing:0.6px">Редактор концо...</div>
<!-- tray -->
<div class="a" style="left:905px;top:744px;width:119px;height:24px;background:linear-gradient(#4a4e66,#2a2c40 6px,#1a1c2c 24px)"></div>
<div class="a" style="left:913px;top:748px;width:16px;height:16px;background:#4c4e52"></div>
<div class="t" style="left:914px;top:751px;font-size:11px;line-height:11px;color:#e8e8e8;letter-spacing:1.5px">RU</div>
<div class="a" style="left:960px;top:746px;width:16px;height:17px;border-radius:50%;background:radial-gradient(circle at 50% 35%,#f8d060,#e07818 60%,#802010)"></div>
<div class="t" style="left:936px;top:752px;font-size:12px;line-height:12px;font-weight:bold;color:#fff;letter-spacing:0.65px;text-shadow:1px 0 0 #000,-1px 0 0 #000,0 1px 0 #000,0 -1px 0 #000,1px 1px 0 #000,-1px -1px 0 #000,1px -1px 0 #000,-1px 1px 0 #000">СМЕТ4UK.RU</div>
</body></html>
